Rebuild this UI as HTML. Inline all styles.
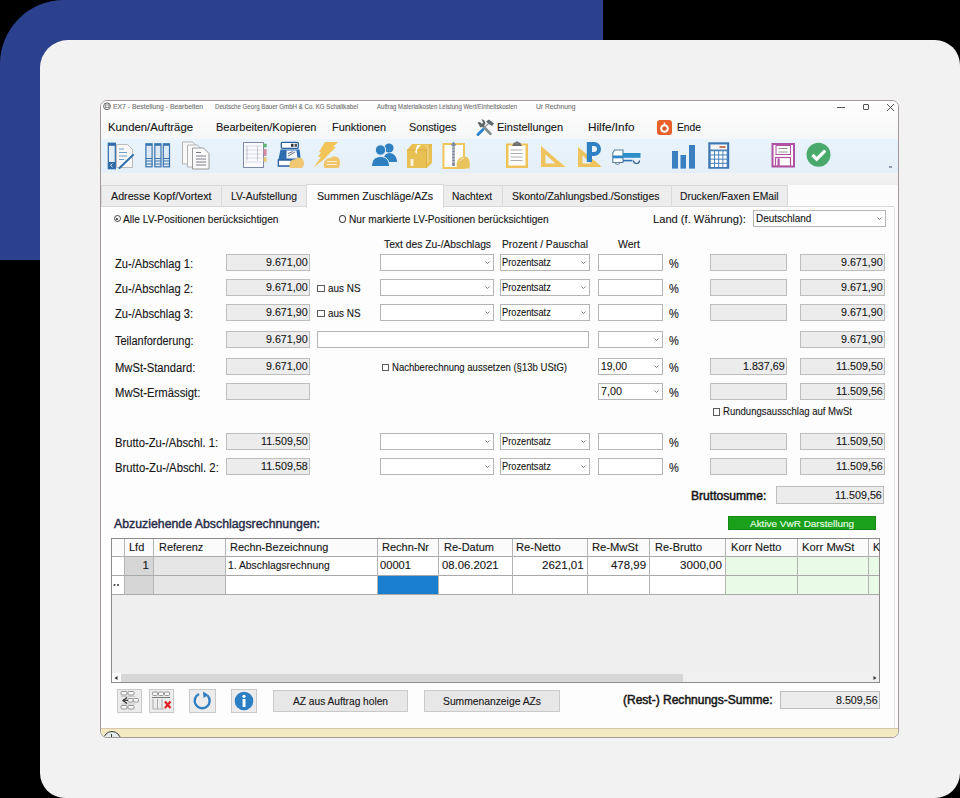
<!DOCTYPE html>
<html><head><meta charset="utf-8">
<style>
*{box-sizing:border-box;margin:0;padding:0}
html,body{width:960px;height:798px;overflow:hidden;background:#000;font-family:"Liberation Sans",sans-serif;color:#222}
.a{position:absolute}
.t{position:absolute;white-space:nowrap;line-height:1;-webkit-text-stroke:0.12px currentColor}
svg{overflow:visible}
</style></head><body>
<div class="a" style="left:0;top:0;width:603px;height:260px;background:#2c418e;border-top-left-radius:64px"></div>
<div class="a" style="left:40px;top:40px;width:920px;height:758px;background:#f2f2f2;border-radius:28px 25px 25px 25px"></div>
<div class="a" style="left:100px;top:100px;width:799px;height:638px;background:#fcfcfc;border:1px solid #a39999;border-radius:7px;overflow:hidden"><div class="a" style="left:0;top:0;width:797px;height:38px;background:linear-gradient(#fdfdfd 0,#fcfcfc 14px,#f5f6f7 38px)"></div><div class="a" style="left:0;top:38px;width:797px;height:34px;background:linear-gradient(#e9f3fb,#e4eff9)"></div><div class="a" style="left:0;top:72px;width:797px;height:12px;background:linear-gradient(#f2f2f2,#efefef)"></div><div class="a" style="left:0;top:627px;width:797px;height:11px;background:#f3eac3;border-top:1px solid #d6c8a8"></div><div class="a" style="left:1.5px;top:630px;width:18px;height:18px;border-radius:50%;background:#e4ecea;border:1.2px solid #3a3a3a"></div><div class="a" style="left:9.5px;top:633px;width:1px;height:5px;background:#2d4a3a"></div></div>
<svg class="a" style="left:102.5px;top:101.5px" width="8" height="8.5" viewBox="0 0 8 8.5"><circle cx="4" cy="4.3" r="3.4" fill="#f4f4f4" stroke="#555" stroke-width="0.9"/><rect x="2.5" y="3" width="3.5" height="2.6" fill="none" stroke="#666" stroke-width="0.7"/></svg>
<span class="t" style="left:113.00px;top:102.86px;font-size:7.5px;font-weight:400;color:#747474;font-family:'Liberation Sans',sans-serif;transform:scaleX(0.9108);transform-origin:0 0;">EX7  -  Bestellung - Bearbeiten</span>
<span class="t" style="left:214.50px;top:102.86px;font-size:7.5px;font-weight:400;color:#747474;font-family:'Liberation Sans',sans-serif;transform:scaleX(0.8167);transform-origin:0 0;">Deutsche Georg Bauer GmbH &amp; Co. KG Schaltkabel</span>
<span class="t" style="left:376.60px;top:102.86px;font-size:7.5px;font-weight:400;color:#747474;font-family:'Liberation Sans',sans-serif;transform:scaleX(0.8040);transform-origin:0 0;">Auftrag Materialkosten Leistung Wert/Einheitskosten</span>
<span class="t" style="left:535.50px;top:102.86px;font-size:7.5px;font-weight:400;color:#747474;font-family:'Liberation Sans',sans-serif;transform:scaleX(0.8936);transform-origin:0 0;">Ur Rechnung</span>
<div class="a" style="left:837px;top:106.5px;width:8px;height:1.0px;background:#555;"></div>
<div class="a" style="left:862.5px;top:103.5px;width:6.5px;height:6.5px;border:1px solid #555;border-radius:1px"></div>
<svg class="a" style="left:886.5px;top:103.5px" width="7" height="7" viewBox="0 0 7 7"><path d="M0 0L7 7M7 0L0 7" stroke="#555" stroke-width="1"/></svg>
<span class="t" style="left:108.00px;top:122.43px;font-size:11.5px;font-weight:400;color:#161616;font-family:'Liberation Sans',sans-serif;transform:scaleX(0.9846);transform-origin:0 0;">Kunden/Aufträge</span>
<span class="t" style="left:216.00px;top:122.43px;font-size:11.5px;font-weight:400;color:#161616;font-family:'Liberation Sans',sans-serif;transform:scaleX(0.9584);transform-origin:0 0;">Bearbeiten/Kopieren</span>
<span class="t" style="left:331.50px;top:122.43px;font-size:11.5px;font-weight:400;color:#161616;font-family:'Liberation Sans',sans-serif;transform:scaleX(0.9489);transform-origin:0 0;">Funktionen</span>
<span class="t" style="left:408.70px;top:122.43px;font-size:11.5px;font-weight:400;color:#161616;font-family:'Liberation Sans',sans-serif;transform:scaleX(0.9363);transform-origin:0 0;">Sonstiges</span>
<svg class="a" style="left:476px;top:118px" width="18" height="18" viewBox="0 0 18 18"><path d="M6.5 7.5L14.5 15.8" stroke="#7f8c8a" stroke-width="2.6" stroke-linecap="round"/><path d="M1.5 4.5l2.5-0.5 2 2 1-1.5-1.5-3.5 3 1.5 1 3-2 3-3 1z" fill="#5e6668"/><path d="M12.5 5.5L8 10" stroke="#999" stroke-width="1.2"/><path d="M10 3.5l3-2 5 4-1.8 2.5-3.5-2z" fill="#5f6b6e"/><path d="M7 11.5L2 16.5" stroke="#2f86d0" stroke-width="3" stroke-linecap="round"/></svg>
<span class="t" style="left:497.00px;top:122.43px;font-size:11.5px;font-weight:400;color:#161616;font-family:'Liberation Sans',sans-serif;transform:scaleX(0.9557);transform-origin:0 0;">Einstellungen</span>
<span class="t" style="left:588.00px;top:122.43px;font-size:11.5px;font-weight:400;color:#161616;font-family:'Liberation Sans',sans-serif;transform:scaleX(1.0244);transform-origin:0 0;">Hilfe/Info</span>
<div class="a" style="left:657px;top:119.5px;width:15px;height:15.5px;background:#e8612a;border-radius:3px"></div>
<svg class="a" style="left:657px;top:119.5px" width="15" height="15.5" viewBox="0 0 15 15.5"><circle cx="7.5" cy="8.5" r="4.3" fill="#fff"/><circle cx="7.5" cy="8.5" r="2.3" fill="#e8612a"/><circle cx="7.5" cy="8.5" r="1.2" fill="#c85a30"/><path d="M7.5 2.5v3" stroke="#fff" stroke-width="1.4"/></svg>
<span class="t" style="left:676.50px;top:122.43px;font-size:11.5px;font-weight:400;color:#161616;font-family:'Liberation Sans',sans-serif;transform:scaleX(0.8935);transform-origin:0 0;">Ende</span>
<svg class="a" style="left:107px;top:142px" width="28" height="28" viewBox="0 0 28 28"><path d="M9.5 2.5h11l5 5v18H9.5z" fill="#f7f7f7" stroke="#b4b4b4" stroke-width="0.9"/><path d="M12 7h5M12 10.5h8M12 14h8M12 17.5h5" stroke="#6f9fcf" stroke-width="1"/><rect x="1.3" y="1.2" width="7" height="25.5" fill="#e4eef7" stroke="#2f6aa8" stroke-width="1.2"/><rect x="1.3" y="1.2" width="7" height="2.6" fill="#2f6aa8"/><rect x="1.3" y="20" width="7" height="6.7" fill="#2f6aa8"/><path d="M5.5 21.5l-2 1.8 2 1.8" stroke="#fff" stroke-width="0.9" fill="none"/><path d="M12.5 26L26 13" stroke="#2f6fae" stroke-width="2" stroke-linecap="round"/></svg>
<svg class="a" style="left:145px;top:143px" width="26" height="25" viewBox="0 0 26 25"><rect x="0.9" y="0.8" width="6.2" height="23" fill="#dde9f5" stroke="#3a74ae" stroke-width="1.2"/><rect x="0.9" y="0.8" width="6.2" height="2" fill="#3a74ae"/><path d="M0.9 15.5h6.2M0.9 18h6.2M0.9 21h6.2" stroke="#3a74ae" stroke-width="1.1"/><rect x="9.8" y="0.8" width="6.2" height="23" fill="#dde9f5" stroke="#3a74ae" stroke-width="1.2"/><rect x="9.8" y="0.8" width="6.2" height="2" fill="#3a74ae"/><path d="M9.8 15.5h6.2M9.8 18h6.2M9.8 21h6.2" stroke="#3a74ae" stroke-width="1.1"/><rect x="18.3" y="0.8" width="6.2" height="23" fill="#dde9f5" stroke="#3a74ae" stroke-width="1.2"/><rect x="18.3" y="0.8" width="6.2" height="2" fill="#3a74ae"/><path d="M18.3 15.5h6.2M18.3 18h6.2M18.3 21h6.2" stroke="#3a74ae" stroke-width="1.1"/></svg>
<svg class="a" style="left:181px;top:141px" width="30" height="29" viewBox="0 0 30 29"><path d="M1.5 1h10l4 4v18h-14z" fill="#f9f9f9" stroke="#aaa" stroke-width="0.9"/><path d="M6.5 4h10l4 4v18h-14z" fill="#f9f9f9" stroke="#aaa" stroke-width="0.9"/><path d="M11.5 7h11l5.5 5.5v15.5h-16.5z" fill="#fbfbfb" stroke="#999" stroke-width="1"/><path d="M15 11.5h5M15 15h10M15 18h10M15 21h10M15 24h10" stroke="#7a7a88" stroke-width="1"/></svg>
<svg class="a" style="left:242px;top:141px" width="26" height="28" viewBox="0 0 26 28"><rect x="1.5" y="1.5" width="20" height="25" fill="#fbfbfd" stroke="#7f89aa" stroke-width="1"/><path d="M3 5h17M3 9h17M3 13h17M3 17h17M3 21h17" stroke="#d0d3de" stroke-width="0.8"/><path d="M5 5.5v14M15.5 5.5v14" stroke="#a8acbe" stroke-width="0.7"/><circle cx="23" cy="4.5" r="2" fill="#5cb870"/><rect x="21.6" y="8" width="3" height="7" rx="1.2" fill="#d58ca0"/><rect x="21.6" y="16" width="3" height="5" rx="1" fill="#ecc672"/></svg>
<svg class="a" style="left:276px;top:141px" width="30" height="29" viewBox="0 0 30 29"><rect x="5.3" y="1.3" width="17" height="6" rx="1" fill="#fff" stroke="#2a5f9e" stroke-width="1.3"/><rect x="15" y="2.8" width="2.5" height="3" fill="#333"/><rect x="18.5" y="2.8" width="2.5" height="3" fill="#555"/><path d="M4.5 8.5h19l1.5 12H2z" fill="#2e6db0"/><path d="M10.5 9.5h10l1 8h-11z" fill="#f2f6fa"/><path d="M12 15l7-4M12 12.5l5-2" stroke="#556" stroke-width="0.8"/><path d="M2.3 19h13v6H2.3z" fill="#fff" stroke="#2a5f9e" stroke-width="1.3"/><path d="M14 27c-2-5 1-9 6-9 1-2 6-2 7 1 2 2 1 6-1 8z" fill="#f0c772"/></svg>
<svg class="a" style="left:313px;top:141px" width="28" height="29" viewBox="0 0 28 29"><path d="M12 1h13l-5 5h3L12 17l2-1-13 10 7-10H5l3-5H6z" fill="#f2c45a"/><path d="M11.5 27c-2-4 0-10 6-10 2-2 6-2 8 0 2 2 2 7 0 10z" fill="#f0c56a"/><path d="M14 20.5h10M14 23.5h10" stroke="#fff" stroke-width="1" opacity="0.7"/></svg>
<svg class="a" style="left:371px;top:142px" width="27" height="26" viewBox="0 0 27 26"><circle cx="18" cy="6" r="4.6" fill="#2f80c0"/><path d="M12 20c0-6 3-9 6.5-9s7.5 3 7.5 9z" fill="#2f80c0"/><circle cx="9.5" cy="8" r="5.2" fill="#2f80c0" stroke="#e8f2fb" stroke-width="1"/><path d="M0.5 24.5c0-7 4-10 9-10s9 3 9 10z" fill="#2f80c0" stroke="#e8f2fb" stroke-width="1"/></svg>
<svg class="a" style="left:406px;top:142px" width="28" height="27" viewBox="0 0 28 27"><path d="M1 8l5-6h20v19l-5.5 5H1z" fill="#e8c054"/><path d="M1 8h19.5v18" fill="none" stroke="#d9ae3e" stroke-width="0.9"/><path d="M20.5 8l5.5-6" stroke="#d9ae3e" stroke-width="0.9"/><path d="M11 3h4l-4 5v4l-2-2z" fill="#fff" opacity="0.85"/><path d="M19 3.5l3 1v16" stroke="#fff" stroke-width="0.8" opacity="0.6" fill="none"/><rect x="4.5" y="17" width="3" height="7" fill="#fff" opacity="0.8"/></svg>
<svg class="a" style="left:442px;top:141px" width="29" height="29" viewBox="0 0 29 29"><rect x="1.5" y="3" width="20.5" height="24" fill="#fff" stroke="#efc65c" stroke-width="2"/><path d="M11.5 3v22" stroke="#7a8290" stroke-width="2.6"/><path d="M10 6h3M10 9h3M10 12h3M10 15h3M10 18h3M10 21h3" stroke="#e8e8ee" stroke-width="0.8"/><path d="M8.5 4.5l3-4l3 4z" fill="#7a8ba0"/><path d="M15 27.5c-1.5-6 1-11.5 6.5-12s7 4 6 12z" fill="#e9c35e"/><path d="M18 20c1-2 3-3 4-3" stroke="#fff" stroke-width="1" fill="none" opacity="0.7"/></svg>
<svg class="a" style="left:505px;top:140px" width="24" height="29" viewBox="0 0 24 29"><rect x="1" y="3.5" width="22" height="24.5" fill="#f0c25a"/><rect x="3.5" y="5.5" width="17" height="20" fill="#fff"/><path d="M5.5 10h12M5.5 13.5h12M5.5 17h12M5.5 20.5h12" stroke="#8a8a8a" stroke-width="0.7"/><path d="M7 6l2-3.5h6l2 3.5z" fill="#6f6f6f"/><circle cx="12" cy="2.8" r="1.6" fill="#777"/></svg>
<svg class="a" style="left:540px;top:145px" width="27" height="23" viewBox="0 0 27 23"><path d="M1 1L25.5 22H1z" fill="#efc35d"/><path d="M5.5 9.5L15.5 18.5H5.5z" fill="#e9f2fa"/></svg>
<svg class="a" style="left:577px;top:141px" width="28" height="28" viewBox="0 0 28 28"><path d="M1 6L25 26H1z" fill="#efc35d"/><path d="M5.5 14.5L14 22.5H5.5z" fill="#e9f2fa"/><path d="M9.8 21V1h7.2a7 7 0 0 1 0 14H15v6z" fill="#2e82c4"/><path d="M15 5h2a3 3 0 0 1 0 6h-2z" fill="#e9f2fa"/></svg>
<svg class="a" style="left:611px;top:148px" width="30" height="17" viewBox="0 0 30 17"><path d="M1.8 14.5V5L3.5 2H12v12.5z" fill="#fff" stroke="#5a7f95" stroke-width="1.1"/><rect x="1.8" y="7.5" width="10.2" height="2.8" fill="#2e86c6"/><rect x="11.8" y="5" width="17.7" height="4.8" fill="#2e8fc8"/><rect x="12" y="11.8" width="9.5" height="1.6" fill="#2e72b5"/><path d="M22.5 12.5a3 3 0 0 0 6 0" fill="none" stroke="#2e5a8a" stroke-width="1.2"/><path d="M4 14a2.5 2.5 0 0 0 5 0" fill="none" stroke="#6a8a9a" stroke-width="1"/></svg>
<svg class="a" style="left:672px;top:145px" width="24" height="24" viewBox="0 0 24 24"><rect x="0" y="6" width="6" height="17.6" fill="#3a7fc0"/><rect x="8.5" y="10" width="5.5" height="13.6" fill="#3a7fc0"/><rect x="17" y="0" width="6" height="23.6" fill="#3a7fc0"/></svg>
<svg class="a" style="left:708px;top:142px" width="22" height="27" viewBox="0 0 22 27"><rect x="1" y="1" width="19.5" height="25" fill="#4f86bf" stroke="#3a72ad" stroke-width="1.4"/><rect x="2.5" y="2.5" width="16.5" height="5" fill="#f4f4f4"/><rect x="11.5" y="4" width="6" height="2" fill="#c9785a"/><rect x="2.8" y="9.3" width="3.2" height="3.1" fill="#fff"/><rect x="7.0" y="9.3" width="3.2" height="3.1" fill="#fff"/><rect x="11.2" y="9.3" width="3.2" height="3.1" fill="#fff"/><rect x="15.400000000000002" y="9.3" width="3.2" height="3.1" fill="#fff"/><rect x="2.8" y="13.5" width="3.2" height="3.1" fill="#fff"/><rect x="7.0" y="13.5" width="3.2" height="3.1" fill="#fff"/><rect x="11.2" y="13.5" width="3.2" height="3.1" fill="#fff"/><rect x="15.400000000000002" y="13.5" width="3.2" height="3.1" fill="#fff"/><rect x="2.8" y="17.700000000000003" width="3.2" height="3.1" fill="#fff"/><rect x="7.0" y="17.700000000000003" width="3.2" height="3.1" fill="#fff"/><rect x="11.2" y="17.700000000000003" width="3.2" height="3.1" fill="#fff"/><rect x="15.400000000000002" y="17.700000000000003" width="3.2" height="3.1" fill="#fff"/><rect x="2.8" y="21.900000000000002" width="3.2" height="3.1" fill="#fff"/><rect x="7.0" y="21.900000000000002" width="3.2" height="3.1" fill="#fff"/><rect x="11.2" y="21.900000000000002" width="3.2" height="3.1" fill="#fff"/><rect x="15.400000000000002" y="21.900000000000002" width="3.2" height="3.1" fill="#fff"/></svg>
<svg class="a" style="left:771px;top:143px" width="25" height="25" viewBox="0 0 25 25"><path d="M1.5 1h21.5v22.5H1.5z" fill="#fff" stroke="#b051a1" stroke-width="2"/><rect x="5" y="2.5" width="14.5" height="9" fill="#fff" stroke="#b051a1" stroke-width="1"/><path d="M7.5 5.5h9M7.5 9h9" stroke="#8a8a8a" stroke-width="0.9"/><rect x="4.5" y="14.5" width="15" height="8.5" fill="#fff" stroke="#b051a1" stroke-width="1.2"/><rect x="6.5" y="15.5" width="2.2" height="7.5" fill="#b051a1"/></svg>
<svg class="a" style="left:806px;top:142px" width="26" height="26" viewBox="0 0 26 26"><circle cx="12.5" cy="12.7" r="12" fill="#4aaa6b"/><path d="M6.5 13l4.2 4.2 8.5-8.5" fill="none" stroke="#fff" stroke-width="3.2"/></svg>
<div class="a" style="left:889px;top:166px;width:3px;height:2px;background:#8a9bb0;"></div>
<div class="a" style="left:101px;top:207px;width:797px;height:521px;background:#fdfdfd"></div>
<div class="a" style="left:894px;top:207px;width:1px;height:521px;background:#e4e4e4"></div>
<div class="a" style="left:101px;top:184.5px;width:120.5px;height:22px;background:#ededed;border:1px solid #d9d9d9;border-bottom:none"></div>
<span class="t" style="left:110.50px;top:191.46px;font-size:11px;font-weight:400;color:#161616;font-family:'Liberation Sans',sans-serif;transform:scaleX(0.9725);transform-origin:0 0;">Adresse Kopf/Vortext</span>
<div class="a" style="left:220.5px;top:184.5px;width:86.5px;height:22px;background:#ededed;border:1px solid #d9d9d9;border-bottom:none"></div>
<span class="t" style="left:231.00px;top:191.46px;font-size:11px;font-weight:400;color:#161616;font-family:'Liberation Sans',sans-serif;transform:scaleX(0.9412);transform-origin:0 0;">LV-Aufstellung</span>
<div class="a" style="left:443.3px;top:184.5px;width:59.69999999999999px;height:22px;background:#ededed;border:1px solid #d9d9d9;border-bottom:none"></div>
<span class="t" style="left:451.80px;top:191.46px;font-size:11px;font-weight:400;color:#161616;font-family:'Liberation Sans',sans-serif;transform:scaleX(0.9258);transform-origin:0 0;">Nachtext</span>
<div class="a" style="left:502px;top:184.5px;width:170px;height:22px;background:#ededed;border:1px solid #d9d9d9;border-bottom:none"></div>
<span class="t" style="left:512.00px;top:191.46px;font-size:11px;font-weight:400;color:#161616;font-family:'Liberation Sans',sans-serif;transform:scaleX(0.9490);transform-origin:0 0;">Skonto/Zahlungsbed./Sonstiges</span>
<div class="a" style="left:671px;top:184.5px;width:117.39999999999998px;height:22px;background:#ededed;border:1px solid #d9d9d9;border-bottom:none"></div>
<span class="t" style="left:680.00px;top:191.46px;font-size:11px;font-weight:400;color:#161616;font-family:'Liberation Sans',sans-serif;transform:scaleX(0.9377);transform-origin:0 0;">Drucken/Faxen EMail</span>
<div class="a" style="left:101px;top:206px;width:793px;height:1px;background:#d9d9d9"></div>
<div class="a" style="left:305.7px;top:183.5px;width:138px;height:24px;background:#fdfdfd;border:1px solid #d9d9d9;border-bottom:none"></div>
<span class="t" style="left:316.50px;top:191.26px;font-size:11px;font-weight:400;color:#161616;font-family:'Liberation Sans',sans-serif;transform:scaleX(0.9632);transform-origin:0 0;">Summen Zuschläge/AZs</span>
<div class="a" style="left:113.5px;top:215px;width:7px;height:7px;border:1px solid #444;border-radius:50%"><div class="a" style="left:1.5px;top:1.5px;width:2px;height:2px;background:#222;border-radius:50%"></div></div>
<span class="t" style="left:123.00px;top:213.53px;font-size:11.5px;font-weight:400;color:#161616;font-family:'Liberation Sans',sans-serif;transform:scaleX(0.8856);transform-origin:0 0;">Alle LV-Positionen berücksichtigen</span>
<div class="a" style="left:339px;top:215px;width:7px;height:8px;border:1px solid #444;border-radius:50%"></div>
<span class="t" style="left:349.00px;top:213.53px;font-size:11.5px;font-weight:400;color:#161616;font-family:'Liberation Sans',sans-serif;transform:scaleX(0.8829);transform-origin:0 0;">Nur markierte LV-Positionen berücksichtigen</span>
<span class="t" style="left:653.00px;top:213.53px;font-size:11.5px;font-weight:400;color:#161616;font-family:'Liberation Sans',sans-serif;transform:scaleX(0.9678);transform-origin:0 0;">Land (f. Währung):</span>
<div class="a" style="left:753px;top:210px;width:133px;height:17px;background:#fff;border:1px solid #b5b5b5"></div>
<span class="t" style="left:755.50px;top:213.43px;font-size:11.5px;font-weight:400;color:#161616;font-family:'Liberation Sans',sans-serif;transform:scaleX(0.8665);transform-origin:0 0;">Deutschland</span>
<svg class="a" style="left:877px;top:217.2px" width="5" height="3" viewBox="0 0 5 3"><path d="M0.5 0.5L2.5 2.5L4.5 0.5" fill="none" stroke="#777" stroke-width="0.9"/></svg>
<span class="t" style="left:383.60px;top:239.23px;font-size:11.5px;font-weight:400;color:#161616;font-family:'Liberation Sans',sans-serif;transform:scaleX(0.8952);transform-origin:0 0;">Text des Zu-/Abschlags</span>
<span class="t" style="left:502.00px;top:239.23px;font-size:11.5px;font-weight:400;color:#161616;font-family:'Liberation Sans',sans-serif;transform:scaleX(0.8909);transform-origin:0 0;">Prozent / Pauschal</span>
<span class="t" style="left:618.00px;top:239.23px;font-size:11.5px;font-weight:400;color:#161616;font-family:'Liberation Sans',sans-serif;transform:scaleX(0.9137);transform-origin:0 0;">Wert</span>
<span class="t" style="left:114.80px;top:257.50px;font-size:12px;font-weight:400;color:#161616;font-family:'Liberation Sans',sans-serif;transform:scaleX(0.9281);transform-origin:0 0;">Zu-/Abschlag 1:</span>
<div class="a" style="left:226px;top:254px;width:83.60000000000002px;height:17px;background:#ececec;border:1px solid #bdbdbd"></div>
<span class="t" style="left:265.80px;top:257.43px;font-size:11.5px;font-weight:400;color:#161616;font-family:'Liberation Sans',sans-serif;transform:scaleX(0.9293);transform-origin:0 0;">9.671,00</span>
<div class="a" style="left:800px;top:254px;width:85px;height:17px;background:#ececec;border:1px solid #bdbdbd"></div>
<span class="t" style="left:841.20px;top:257.43px;font-size:11.5px;font-weight:400;color:#161616;font-family:'Liberation Sans',sans-serif;transform:scaleX(0.9293);transform-origin:0 0;">9.671,90</span>
<div class="a" style="left:380px;top:254px;width:113.5px;height:17px;background:#fff;border:1px solid #b5b5b5"></div>
<svg class="a" style="left:484.5px;top:261.2px" width="5" height="3" viewBox="0 0 5 3"><path d="M0.5 0.5L2.5 2.5L4.5 0.5" fill="none" stroke="#777" stroke-width="0.9"/></svg>
<div class="a" style="left:499.5px;top:254px;width:90.0px;height:17px;background:#fff;border:1px solid #b5b5b5"></div>
<span class="t" style="left:502.00px;top:257.43px;font-size:11.5px;font-weight:400;color:#161616;font-family:'Liberation Sans',sans-serif;transform:scaleX(0.8035);transform-origin:0 0;">Prozentsatz</span>
<svg class="a" style="left:580.5px;top:261.2px" width="5" height="3" viewBox="0 0 5 3"><path d="M0.5 0.5L2.5 2.5L4.5 0.5" fill="none" stroke="#777" stroke-width="0.9"/></svg>
<div class="a" style="left:598.3px;top:254px;width:64.70000000000005px;height:17px;background:#fff;border:1px solid #b5b5b5"></div>
<span class="t" style="left:668.70px;top:257.50px;font-size:12px;font-weight:400;color:#161616;font-family:'Liberation Sans',sans-serif;transform:scaleX(0.9183);transform-origin:0 0;">%</span>
<div class="a" style="left:710px;top:254px;width:76.5px;height:17px;background:#ececec;border:1px solid #bdbdbd"></div>
<span class="t" style="left:114.80px;top:282.50px;font-size:12px;font-weight:400;color:#161616;font-family:'Liberation Sans',sans-serif;transform:scaleX(0.9281);transform-origin:0 0;">Zu-/Abschlag 2:</span>
<div class="a" style="left:226px;top:279px;width:83.60000000000002px;height:17px;background:#ececec;border:1px solid #bdbdbd"></div>
<span class="t" style="left:265.80px;top:282.43px;font-size:11.5px;font-weight:400;color:#161616;font-family:'Liberation Sans',sans-serif;transform:scaleX(0.9293);transform-origin:0 0;">9.671,00</span>
<div class="a" style="left:800px;top:279px;width:85px;height:17px;background:#ececec;border:1px solid #bdbdbd"></div>
<span class="t" style="left:841.20px;top:282.43px;font-size:11.5px;font-weight:400;color:#161616;font-family:'Liberation Sans',sans-serif;transform:scaleX(0.9293);transform-origin:0 0;">9.671,90</span>
<div class="a" style="left:380px;top:279px;width:113.5px;height:17px;background:#fff;border:1px solid #b5b5b5"></div>
<svg class="a" style="left:484.5px;top:286.2px" width="5" height="3" viewBox="0 0 5 3"><path d="M0.5 0.5L2.5 2.5L4.5 0.5" fill="none" stroke="#777" stroke-width="0.9"/></svg>
<div class="a" style="left:499.5px;top:279px;width:90.0px;height:17px;background:#fff;border:1px solid #b5b5b5"></div>
<span class="t" style="left:502.00px;top:282.43px;font-size:11.5px;font-weight:400;color:#161616;font-family:'Liberation Sans',sans-serif;transform:scaleX(0.8035);transform-origin:0 0;">Prozentsatz</span>
<svg class="a" style="left:580.5px;top:286.2px" width="5" height="3" viewBox="0 0 5 3"><path d="M0.5 0.5L2.5 2.5L4.5 0.5" fill="none" stroke="#777" stroke-width="0.9"/></svg>
<div class="a" style="left:598.3px;top:279px;width:64.70000000000005px;height:17px;background:#fff;border:1px solid #b5b5b5"></div>
<span class="t" style="left:668.70px;top:282.50px;font-size:12px;font-weight:400;color:#161616;font-family:'Liberation Sans',sans-serif;transform:scaleX(0.9183);transform-origin:0 0;">%</span>
<div class="a" style="left:710px;top:279px;width:76.5px;height:17px;background:#ececec;border:1px solid #bdbdbd"></div>
<div class="a" style="left:317px;top:284.5px;width:7.5px;height:7.5px;border:1px solid #5a5a5a;background:#fff"></div>
<span class="t" style="left:328.00px;top:282.73px;font-size:11.5px;font-weight:400;color:#161616;font-family:'Liberation Sans',sans-serif;transform:scaleX(0.8616);transform-origin:0 0;">aus NS</span>
<span class="t" style="left:114.80px;top:307.50px;font-size:12px;font-weight:400;color:#161616;font-family:'Liberation Sans',sans-serif;transform:scaleX(0.9281);transform-origin:0 0;">Zu-/Abschlag 3:</span>
<div class="a" style="left:226px;top:304px;width:83.60000000000002px;height:17px;background:#ececec;border:1px solid #bdbdbd"></div>
<span class="t" style="left:265.80px;top:307.43px;font-size:11.5px;font-weight:400;color:#161616;font-family:'Liberation Sans',sans-serif;transform:scaleX(0.9293);transform-origin:0 0;">9.671,90</span>
<div class="a" style="left:800px;top:304px;width:85px;height:17px;background:#ececec;border:1px solid #bdbdbd"></div>
<span class="t" style="left:841.20px;top:307.43px;font-size:11.5px;font-weight:400;color:#161616;font-family:'Liberation Sans',sans-serif;transform:scaleX(0.9293);transform-origin:0 0;">9.671,90</span>
<div class="a" style="left:380px;top:304px;width:113.5px;height:17px;background:#fff;border:1px solid #b5b5b5"></div>
<svg class="a" style="left:484.5px;top:311.2px" width="5" height="3" viewBox="0 0 5 3"><path d="M0.5 0.5L2.5 2.5L4.5 0.5" fill="none" stroke="#777" stroke-width="0.9"/></svg>
<div class="a" style="left:499.5px;top:304px;width:90.0px;height:17px;background:#fff;border:1px solid #b5b5b5"></div>
<span class="t" style="left:502.00px;top:307.43px;font-size:11.5px;font-weight:400;color:#161616;font-family:'Liberation Sans',sans-serif;transform:scaleX(0.8035);transform-origin:0 0;">Prozentsatz</span>
<svg class="a" style="left:580.5px;top:311.2px" width="5" height="3" viewBox="0 0 5 3"><path d="M0.5 0.5L2.5 2.5L4.5 0.5" fill="none" stroke="#777" stroke-width="0.9"/></svg>
<div class="a" style="left:598.3px;top:304px;width:64.70000000000005px;height:17px;background:#fff;border:1px solid #b5b5b5"></div>
<span class="t" style="left:668.70px;top:307.50px;font-size:12px;font-weight:400;color:#161616;font-family:'Liberation Sans',sans-serif;transform:scaleX(0.9183);transform-origin:0 0;">%</span>
<div class="a" style="left:710px;top:304px;width:76.5px;height:17px;background:#ececec;border:1px solid #bdbdbd"></div>
<div class="a" style="left:317px;top:309.5px;width:7.5px;height:7.5px;border:1px solid #5a5a5a;background:#fff"></div>
<span class="t" style="left:328.00px;top:307.73px;font-size:11.5px;font-weight:400;color:#161616;font-family:'Liberation Sans',sans-serif;transform:scaleX(0.8616);transform-origin:0 0;">aus NS</span>
<span class="t" style="left:114.80px;top:334.50px;font-size:12px;font-weight:400;color:#161616;font-family:'Liberation Sans',sans-serif;transform:scaleX(0.9133);transform-origin:0 0;">Teilanforderung:</span>
<div class="a" style="left:226px;top:331px;width:83.60000000000002px;height:17px;background:#ececec;border:1px solid #bdbdbd"></div>
<span class="t" style="left:265.80px;top:334.43px;font-size:11.5px;font-weight:400;color:#161616;font-family:'Liberation Sans',sans-serif;transform:scaleX(0.9293);transform-origin:0 0;">9.671,90</span>
<div class="a" style="left:800px;top:331px;width:85px;height:17px;background:#ececec;border:1px solid #bdbdbd"></div>
<span class="t" style="left:841.20px;top:334.43px;font-size:11.5px;font-weight:400;color:#161616;font-family:'Liberation Sans',sans-serif;transform:scaleX(0.9293);transform-origin:0 0;">9.671,90</span>
<div class="a" style="left:316.7px;top:331px;width:272.8px;height:17px;background:#fff;border:1px solid #b5b5b5"></div>
<div class="a" style="left:598.3px;top:331px;width:64.70000000000005px;height:17px;background:#fff;border:1px solid #b5b5b5"></div>
<svg class="a" style="left:654px;top:338.2px" width="5" height="3" viewBox="0 0 5 3"><path d="M0.5 0.5L2.5 2.5L4.5 0.5" fill="none" stroke="#777" stroke-width="0.9"/></svg>
<span class="t" style="left:668.70px;top:334.50px;font-size:12px;font-weight:400;color:#161616;font-family:'Liberation Sans',sans-serif;transform:scaleX(0.9183);transform-origin:0 0;">%</span>
<span class="t" style="left:114.80px;top:361.50px;font-size:12px;font-weight:400;color:#161616;font-family:'Liberation Sans',sans-serif;transform:scaleX(0.9344);transform-origin:0 0;">MwSt-Standard:</span>
<div class="a" style="left:226px;top:358px;width:83.60000000000002px;height:17px;background:#ececec;border:1px solid #bdbdbd"></div>
<span class="t" style="left:265.80px;top:361.43px;font-size:11.5px;font-weight:400;color:#161616;font-family:'Liberation Sans',sans-serif;transform:scaleX(0.9293);transform-origin:0 0;">9.671,00</span>
<div class="a" style="left:800px;top:358px;width:85px;height:17px;background:#ececec;border:1px solid #bdbdbd"></div>
<span class="t" style="left:836.00px;top:361.43px;font-size:11.5px;font-weight:400;color:#161616;font-family:'Liberation Sans',sans-serif;transform:scaleX(0.9302);transform-origin:0 0;">11.509,50</span>
<div class="a" style="left:381.5px;top:363.5px;width:7.5px;height:7.5px;border:1px solid #5a5a5a;background:#fff"></div>
<span class="t" style="left:392.00px;top:361.73px;font-size:11.5px;font-weight:400;color:#161616;font-family:'Liberation Sans',sans-serif;transform:scaleX(0.8295);transform-origin:0 0;">Nachberechnung aussetzen (§13b UStG)</span>
<div class="a" style="left:598.3px;top:358px;width:64.70000000000005px;height:17px;background:#fff;border:1px solid #b5b5b5"></div>
<span class="t" style="left:600.80px;top:361.43px;font-size:11.5px;font-weight:400;color:#161616;font-family:'Liberation Sans',sans-serif;transform:scaleX(0.9034);transform-origin:0 0;">19,00</span>
<svg class="a" style="left:654px;top:365.2px" width="5" height="3" viewBox="0 0 5 3"><path d="M0.5 0.5L2.5 2.5L4.5 0.5" fill="none" stroke="#777" stroke-width="0.9"/></svg>
<span class="t" style="left:668.70px;top:361.50px;font-size:12px;font-weight:400;color:#161616;font-family:'Liberation Sans',sans-serif;transform:scaleX(0.9183);transform-origin:0 0;">%</span>
<div class="a" style="left:710px;top:358px;width:76.5px;height:17px;background:#ececec;border:1px solid #bdbdbd"></div>
<span class="t" style="left:742.70px;top:361.43px;font-size:11.5px;font-weight:400;color:#161616;font-family:'Liberation Sans',sans-serif;transform:scaleX(0.9293);transform-origin:0 0;">1.837,69</span>
<span class="t" style="left:114.80px;top:386.50px;font-size:12px;font-weight:400;color:#161616;font-family:'Liberation Sans',sans-serif;transform:scaleX(0.9417);transform-origin:0 0;">MwSt-Ermässigt:</span>
<div class="a" style="left:226px;top:383px;width:83.60000000000002px;height:17px;background:#ececec;border:1px solid #bdbdbd"></div>
<div class="a" style="left:800px;top:383px;width:85px;height:17px;background:#ececec;border:1px solid #bdbdbd"></div>
<span class="t" style="left:836.00px;top:386.43px;font-size:11.5px;font-weight:400;color:#161616;font-family:'Liberation Sans',sans-serif;transform:scaleX(0.9302);transform-origin:0 0;">11.509,56</span>
<div class="a" style="left:598.3px;top:383px;width:64.70000000000005px;height:17px;background:#fff;border:1px solid #b5b5b5"></div>
<span class="t" style="left:600.80px;top:386.43px;font-size:11.5px;font-weight:400;color:#161616;font-family:'Liberation Sans',sans-serif;transform:scaleX(0.9379);transform-origin:0 0;">7,00</span>
<svg class="a" style="left:654px;top:390.2px" width="5" height="3" viewBox="0 0 5 3"><path d="M0.5 0.5L2.5 2.5L4.5 0.5" fill="none" stroke="#777" stroke-width="0.9"/></svg>
<span class="t" style="left:668.70px;top:386.50px;font-size:12px;font-weight:400;color:#161616;font-family:'Liberation Sans',sans-serif;transform:scaleX(0.9183);transform-origin:0 0;">%</span>
<div class="a" style="left:710px;top:383px;width:76.5px;height:17px;background:#ececec;border:1px solid #bdbdbd"></div>
<span class="t" style="left:114.80px;top:436.50px;font-size:12px;font-weight:400;color:#161616;font-family:'Liberation Sans',sans-serif;transform:scaleX(0.9360);transform-origin:0 0;">Brutto-Zu-/Abschl. 1:</span>
<div class="a" style="left:226px;top:433px;width:83.60000000000002px;height:17px;background:#ececec;border:1px solid #bdbdbd"></div>
<span class="t" style="left:260.60px;top:436.43px;font-size:11.5px;font-weight:400;color:#161616;font-family:'Liberation Sans',sans-serif;transform:scaleX(0.9302);transform-origin:0 0;">11.509,50</span>
<div class="a" style="left:800px;top:433px;width:85px;height:17px;background:#ececec;border:1px solid #bdbdbd"></div>
<span class="t" style="left:836.00px;top:436.43px;font-size:11.5px;font-weight:400;color:#161616;font-family:'Liberation Sans',sans-serif;transform:scaleX(0.9302);transform-origin:0 0;">11.509,50</span>
<div class="a" style="left:380px;top:433px;width:113.5px;height:17px;background:#fff;border:1px solid #b5b5b5"></div>
<svg class="a" style="left:484.5px;top:440.2px" width="5" height="3" viewBox="0 0 5 3"><path d="M0.5 0.5L2.5 2.5L4.5 0.5" fill="none" stroke="#777" stroke-width="0.9"/></svg>
<div class="a" style="left:499.5px;top:433px;width:90.0px;height:17px;background:#fff;border:1px solid #b5b5b5"></div>
<span class="t" style="left:502.00px;top:436.43px;font-size:11.5px;font-weight:400;color:#161616;font-family:'Liberation Sans',sans-serif;transform:scaleX(0.8035);transform-origin:0 0;">Prozentsatz</span>
<svg class="a" style="left:580.5px;top:440.2px" width="5" height="3" viewBox="0 0 5 3"><path d="M0.5 0.5L2.5 2.5L4.5 0.5" fill="none" stroke="#777" stroke-width="0.9"/></svg>
<div class="a" style="left:598.3px;top:433px;width:64.70000000000005px;height:17px;background:#fff;border:1px solid #b5b5b5"></div>
<span class="t" style="left:668.70px;top:436.50px;font-size:12px;font-weight:400;color:#161616;font-family:'Liberation Sans',sans-serif;transform:scaleX(0.9183);transform-origin:0 0;">%</span>
<div class="a" style="left:710px;top:433px;width:76.5px;height:17px;background:#ececec;border:1px solid #bdbdbd"></div>
<span class="t" style="left:114.80px;top:461.50px;font-size:12px;font-weight:400;color:#161616;font-family:'Liberation Sans',sans-serif;transform:scaleX(0.9432);transform-origin:0 0;">Brutto-Zu-/Abschl. 2:</span>
<div class="a" style="left:226px;top:458px;width:83.60000000000002px;height:17px;background:#ececec;border:1px solid #bdbdbd"></div>
<span class="t" style="left:260.60px;top:461.43px;font-size:11.5px;font-weight:400;color:#161616;font-family:'Liberation Sans',sans-serif;transform:scaleX(0.9302);transform-origin:0 0;">11.509,58</span>
<div class="a" style="left:800px;top:458px;width:85px;height:17px;background:#ececec;border:1px solid #bdbdbd"></div>
<span class="t" style="left:836.00px;top:461.43px;font-size:11.5px;font-weight:400;color:#161616;font-family:'Liberation Sans',sans-serif;transform:scaleX(0.9302);transform-origin:0 0;">11.509,56</span>
<div class="a" style="left:380px;top:458px;width:113.5px;height:17px;background:#fff;border:1px solid #b5b5b5"></div>
<svg class="a" style="left:484.5px;top:465.2px" width="5" height="3" viewBox="0 0 5 3"><path d="M0.5 0.5L2.5 2.5L4.5 0.5" fill="none" stroke="#777" stroke-width="0.9"/></svg>
<div class="a" style="left:499.5px;top:458px;width:90.0px;height:17px;background:#fff;border:1px solid #b5b5b5"></div>
<span class="t" style="left:502.00px;top:461.43px;font-size:11.5px;font-weight:400;color:#161616;font-family:'Liberation Sans',sans-serif;transform:scaleX(0.8035);transform-origin:0 0;">Prozentsatz</span>
<svg class="a" style="left:580.5px;top:465.2px" width="5" height="3" viewBox="0 0 5 3"><path d="M0.5 0.5L2.5 2.5L4.5 0.5" fill="none" stroke="#777" stroke-width="0.9"/></svg>
<div class="a" style="left:598.3px;top:458px;width:64.70000000000005px;height:17px;background:#fff;border:1px solid #b5b5b5"></div>
<span class="t" style="left:668.70px;top:461.50px;font-size:12px;font-weight:400;color:#161616;font-family:'Liberation Sans',sans-serif;transform:scaleX(0.9183);transform-origin:0 0;">%</span>
<div class="a" style="left:710px;top:458px;width:76.5px;height:17px;background:#ececec;border:1px solid #bdbdbd"></div>
<div class="a" style="left:712.8px;top:408px;width:7.5px;height:7.5px;border:1px solid #5a5a5a;background:#fff"></div>
<span class="t" style="left:722.80px;top:406.23px;font-size:11.5px;font-weight:400;color:#161616;font-family:'Liberation Sans',sans-serif;transform:scaleX(0.8304);transform-origin:0 0;">Rundungsausschlag auf MwSt</span>
<span class="t" style="left:690.70px;top:489.80px;font-size:12px;font-weight:400;color:#161616;font-family:'Liberation Sans',sans-serif;transform:scaleX(1.0080);transform-origin:0 0;-webkit-text-stroke:0.5px currentColor">Bruttosumme:</span>
<div class="a" style="left:776px;top:486px;width:107.5px;height:18px;background:#ececec;border:1px solid #bdbdbd"></div>
<span class="t" style="left:834.50px;top:489.93px;font-size:11.5px;font-weight:400;color:#161616;font-family:'Liberation Sans',sans-serif;transform:scaleX(0.9302);transform-origin:0 0;">11.509,56</span>
<span class="t" style="left:114.00px;top:518.30px;font-size:12px;font-weight:400;color:#262b48;font-family:'Liberation Sans',sans-serif;transform:scaleX(1.0258);transform-origin:0 0;-webkit-text-stroke:0.4px currentColor">Abzuziehende Abschlagsrechnungen:</span>
<div class="a" style="left:728px;top:516.4px;width:148px;height:14px;background:#1aa01a;border:1px solid #138a13"></div>
<span class="t" style="left:750.00px;top:519.15px;font-size:9.5px;font-weight:400;color:#e8ffe8;font-family:'Liberation Sans',sans-serif;transform:scaleX(1.0477);transform-origin:0 0;">Aktive VwR Darstellung</span>
<div class="a" style="left:110.5px;top:538px;width:769.5px;height:145px;background:#efefef;border:1px solid #8f8a8a"></div>
<div class="a" style="left:111.5px;top:539px;width:767.5px;height:17.299999999999955px;background:#fbfbfb;"></div>
<div class="a" style="left:111.5px;top:556.3px;width:767.5px;height:38.200000000000045px;background:#ffffff;"></div>
<div class="a" style="left:124px;top:556.3px;width:29.5px;height:38.200000000000045px;background:#d6d6d6;"></div>
<div class="a" style="left:153.5px;top:556.3px;width:71.80000000000001px;height:38.200000000000045px;background:#e6e6e6;"></div>
<div class="a" style="left:725.5px;top:556.3px;width:153.5px;height:38.200000000000045px;background:#e9fbe6;"></div>
<div class="a" style="left:377px;top:575.3px;width:61.80000000000001px;height:19.200000000000045px;background:#1b7fd0;"></div>
<div class="a" style="left:111.5px;top:555.8px;width:767.5px;height:1.0px;background:#a9a9a9;"></div>
<div class="a" style="left:111.5px;top:574.8px;width:767.5px;height:1.0px;background:#a9a9a9;"></div>
<div class="a" style="left:111.5px;top:594.0px;width:767.5px;height:1.0px;background:#a9a9a9;"></div>
<div class="a" style="left:123.5px;top:539px;width:1.0px;height:55.5px;background:#b4b4b4;"></div>
<div class="a" style="left:153.0px;top:539px;width:1.0px;height:55.5px;background:#b4b4b4;"></div>
<div class="a" style="left:224.8px;top:539px;width:1.0px;height:55.5px;background:#b4b4b4;"></div>
<div class="a" style="left:376.5px;top:539px;width:1.0px;height:55.5px;background:#b4b4b4;"></div>
<div class="a" style="left:438.3px;top:539px;width:1.0px;height:55.5px;background:#b4b4b4;"></div>
<div class="a" style="left:512.3px;top:539px;width:1.0px;height:55.5px;background:#b4b4b4;"></div>
<div class="a" style="left:586.5px;top:539px;width:1.0px;height:55.5px;background:#b4b4b4;"></div>
<div class="a" style="left:649.3px;top:539px;width:1.0px;height:55.5px;background:#b4b4b4;"></div>
<div class="a" style="left:725.0px;top:539px;width:1.0px;height:55.5px;background:#b4b4b4;"></div>
<div class="a" style="left:796.8px;top:539px;width:1.0px;height:55.5px;background:#b4b4b4;"></div>
<div class="a" style="left:867.9px;top:539px;width:1.0px;height:55.5px;background:#b4b4b4;"></div>
<span class="t" style="left:128.70px;top:542.23px;font-size:11.5px;font-weight:400;color:#161616;font-family:'Liberation Sans',sans-serif;transform:scaleX(0.9563);transform-origin:0 0;">Lfd</span>
<span class="t" style="left:158.70px;top:542.23px;font-size:11.5px;font-weight:400;color:#161616;font-family:'Liberation Sans',sans-serif;transform:scaleX(0.9492);transform-origin:0 0;">Referenz</span>
<span class="t" style="left:230.00px;top:542.23px;font-size:11.5px;font-weight:400;color:#161616;font-family:'Liberation Sans',sans-serif;transform:scaleX(0.9490);transform-origin:0 0;">Rechn-Bezeichnung</span>
<span class="t" style="left:382.00px;top:542.23px;font-size:11.5px;font-weight:400;color:#161616;font-family:'Liberation Sans',sans-serif;transform:scaleX(0.9549);transform-origin:0 0;">Rechn-Nr</span>
<span class="t" style="left:443.80px;top:542.23px;font-size:11.5px;font-weight:400;color:#161616;font-family:'Liberation Sans',sans-serif;transform:scaleX(0.9541);transform-origin:0 0;">Re-Datum</span>
<span class="t" style="left:516.30px;top:542.23px;font-size:11.5px;font-weight:400;color:#161616;font-family:'Liberation Sans',sans-serif;transform:scaleX(0.9711);transform-origin:0 0;">Re-Netto</span>
<span class="t" style="left:592.40px;top:542.23px;font-size:11.5px;font-weight:400;color:#161616;font-family:'Liberation Sans',sans-serif;transform:scaleX(0.9729);transform-origin:0 0;">Re-MwSt</span>
<span class="t" style="left:655.00px;top:542.23px;font-size:11.5px;font-weight:400;color:#161616;font-family:'Liberation Sans',sans-serif;transform:scaleX(0.9549);transform-origin:0 0;">Re-Brutto</span>
<span class="t" style="left:730.50px;top:542.23px;font-size:11.5px;font-weight:400;color:#161616;font-family:'Liberation Sans',sans-serif;transform:scaleX(0.9633);transform-origin:0 0;">Korr Netto</span>
<span class="t" style="left:801.50px;top:542.23px;font-size:11.5px;font-weight:400;color:#161616;font-family:'Liberation Sans',sans-serif;transform:scaleX(0.9782);transform-origin:0 0;">Korr MwSt</span>
<span class="t" style="left:873.00px;top:542.23px;font-size:11.5px;font-weight:400;color:#161616;font-family:'Liberation Sans',sans-serif;transform:scaleX(0.9124);transform-origin:0 0;">K</span>
<div class="a" style="left:869px;top:539px;width:10px;height:55.5px;background:transparent;overflow:hidden"></div>
<span class="t" style="left:142.59px;top:560.03px;font-size:11.5px;font-weight:400;color:#161616;font-family:'Liberation Sans',sans-serif;">1</span>
<span class="t" style="left:228.30px;top:560.03px;font-size:11.5px;font-weight:400;color:#161616;font-family:'Liberation Sans',sans-serif;transform:scaleX(0.8986);transform-origin:0 0;">1. Abschlagsrechnung</span>
<span class="t" style="left:379.50px;top:560.03px;font-size:11.5px;font-weight:400;color:#161616;font-family:'Liberation Sans',sans-serif;transform:scaleX(0.9692);transform-origin:0 0;">00001</span>
<span class="t" style="left:441.70px;top:560.03px;font-size:11.5px;font-weight:400;color:#161616;font-family:'Liberation Sans',sans-serif;transform:scaleX(0.9833);transform-origin:0 0;">08.06.2021</span>
<span class="t" style="left:542.00px;top:560.03px;font-size:11.5px;font-weight:400;color:#161616;font-family:'Liberation Sans',sans-serif;transform:scaleX(1.0029);transform-origin:0 0;">2621,01</span>
<span class="t" style="left:611.30px;top:560.03px;font-size:11.5px;font-weight:400;color:#161616;font-family:'Liberation Sans',sans-serif;transform:scaleX(0.9947);transform-origin:0 0;">478,99</span>
<span class="t" style="left:680.00px;top:560.03px;font-size:11.5px;font-weight:400;color:#161616;font-family:'Liberation Sans',sans-serif;transform:scaleX(1.0101);transform-origin:0 0;">3000,00</span>
<svg class="a" style="left:113px;top:583px" width="8" height="4" viewBox="0 0 8 4"><circle cx="1.5" cy="2" r="1" fill="#333"/><circle cx="5" cy="2" r="1" fill="#333"/></svg>
<div class="a" style="left:111.5px;top:673.3px;width:767.5px;height:8.700000000000045px;background:#f0f0f0;"></div>
<div class="a" style="left:120.7px;top:673.5px;width:562.0999999999999px;height:8.5px;background:#d7d7d7;"></div>
<div class="a" style="left:111.5px;top:673.3px;width:9.200000000000003px;height:8.700000000000045px;background:#fafafa;"></div>
<svg class="a" style="left:113.5px;top:676px" width="4" height="4" viewBox="0 0 4 4"><path d="M3.5 0L0.5 2L3.5 4z" fill="#333"/></svg>
<svg class="a" style="left:873px;top:676px" width="4" height="4" viewBox="0 0 4 4"><path d="M0.5 0L3.5 2L0.5 4z" fill="#333"/></svg>
<div class="a" style="left:116.5px;top:688.7px;width:25.30000000000001px;height:24px;background:#ececec;border:1px solid #c9c9c9"></div>
<div class="a" style="left:148.7px;top:688.7px;width:25.80000000000001px;height:24px;background:#ececec;border:1px solid #c9c9c9"></div>
<div class="a" style="left:189.3px;top:688.7px;width:26.399999999999977px;height:24px;background:#ececec;border:1px solid #c9c9c9"></div>
<div class="a" style="left:231px;top:688.7px;width:26px;height:24px;background:#ececec;border:1px solid #c9c9c9"></div>
<svg class="a" style="left:118px;top:690px" width="23" height="21" viewBox="0 0 23 21"><g fill="#fafafa" stroke="#8a8a8a" stroke-width="0.9"><rect x="3" y="1.5" width="6" height="3.5" rx="1"/><rect x="10" y="1.5" width="6" height="3.5" rx="1"/><rect x="10" y="8.5" width="5" height="3.5" rx="1"/><rect x="15.5" y="8.5" width="5" height="3.5" rx="1"/><rect x="3" y="15.5" width="6" height="3.5" rx="1"/><rect x="10" y="15.5" width="6" height="3.5" rx="1"/></g><path d="M3 6.5h14M3 14h14" stroke="#bbb" stroke-width="0.7"/><path d="M9 7.5l-4 3 4 3" stroke="#333" stroke-width="1.3" fill="none"/><path d="M5 10.3h5" stroke="#333" stroke-width="1.1"/></svg>
<svg class="a" style="left:150px;top:690px" width="23" height="21" viewBox="0 0 23 21"><g fill="#fafafa" stroke="#8a8a8a" stroke-width="0.9"><rect x="2.5" y="2" width="5" height="3.5" rx="1"/><rect x="8.5" y="2" width="5" height="3.5" rx="1"/><rect x="14.5" y="2" width="5" height="3.5" rx="1"/></g><path d="M2 7.5h18" stroke="#777" stroke-width="1"/><path d="M3 9v10M7.5 9v10M12 9v10" stroke="#aaa" stroke-width="1"/><path d="M3 19h12" stroke="#aaa" stroke-width="0.8"/><path d="M15 11.5l5.5 6.5M20.5 11.5l-5.5 6.5" stroke="#e02020" stroke-width="2.2"/></svg>
<svg class="a" style="left:191px;top:690px" width="23" height="22" viewBox="0 0 23 22"><path d="M16.5 5.5A7.5 7.5 0 1 1 8 4" fill="none" stroke="#2f7fc4" stroke-width="2.4"/><path d="M12 1.5l5.5 3.5-5 3z" fill="#2f7fc4"/></svg>
<svg class="a" style="left:232px;top:690px" width="24" height="22" viewBox="0 0 24 22"><circle cx="12" cy="11" r="9.3" fill="#2d7fc4"/><circle cx="12" cy="6.3" r="1.6" fill="#fff"/><rect x="10.6" y="9" width="2.9" height="8" fill="#fff"/></svg>
<div class="a" style="left:273px;top:690px;width:135px;height:22px;background:#e7e7e7;border:1px solid #c9c9c9"></div>
<span class="t" style="left:293.00px;top:695.96px;font-size:11px;font-weight:400;color:#161616;font-family:'Liberation Sans',sans-serif;transform:scaleX(0.9247);transform-origin:0 0;">AZ aus Auftrag holen</span>
<div class="a" style="left:423.7px;top:690px;width:136px;height:22px;background:#e7e7e7;border:1px solid #c9c9c9"></div>
<span class="t" style="left:442.70px;top:695.96px;font-size:11px;font-weight:400;color:#161616;font-family:'Liberation Sans',sans-serif;transform:scaleX(0.9372);transform-origin:0 0;">Summenanzeige AZs</span>
<span class="t" style="left:623.00px;top:694.30px;font-size:12px;font-weight:400;color:#161616;font-family:'Liberation Sans',sans-serif;transform:scaleX(1.0007);transform-origin:0 0;-webkit-text-stroke:0.5px currentColor">(Rest-) Rechnungs-Summe:</span>
<div class="a" style="left:780px;top:691px;width:100px;height:17.5px;background:#ececec;border:1px solid #bdbdbd"></div>
<span class="t" style="left:836.20px;top:694.68px;font-size:11.5px;font-weight:400;color:#161616;font-family:'Liberation Sans',sans-serif;transform:scaleX(0.9293);transform-origin:0 0;">8.509,56</span>
</body></html>
